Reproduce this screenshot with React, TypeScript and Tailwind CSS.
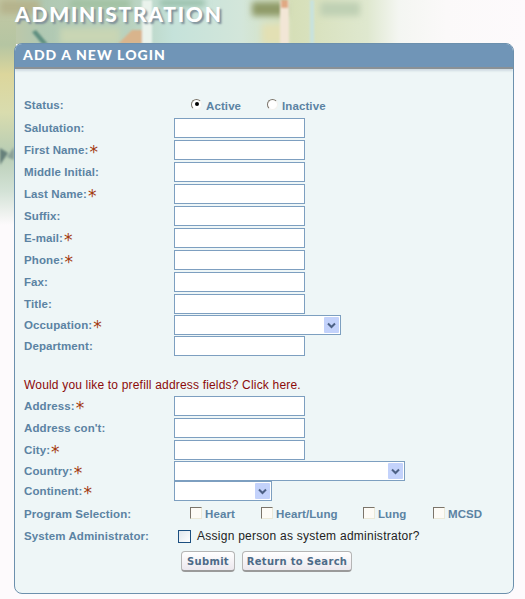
const sans = "font-['Liberation_Sans',Arial,sans-serif]";
const labelText = "text-[11.5px] font-bold tracking-[0.1px] text-[#5b83a3]";

function Star() {
  return <span className="text-[#a33a10] text-[17px] leading-[10px] font-normal font-['DejaVu_Sans',sans-serif] ml-[1px] relative top-[1px]">*</span>;
}

function Label({ text, req }: { text: string; req?: boolean }) {
  return (
    <div className={`flex items-center whitespace-nowrap pt-[2px] ${labelText}`}>
      {text}
      {req && <Star />}
    </div>
  );
}

function Field({ text, req }: { text: string; req?: boolean }) {
  return (
    <div className="flex items-center h-[22px]">
      <div className="w-[150px]"><Label text={text} req={req} /></div>
      <div className="w-[131px] h-[20px] bg-white border border-[#7d9fc0]" />
    </div>
  );
}

function Chevron() {
  return (
    <div className="w-[15px] h-[16px] mr-[1px] bg-[#c3d2fb] rounded-[1px] flex items-center justify-center">
      <svg width="9" height="7" viewBox="0 0 9 7"><path d="M1 1.5 L4.5 5 L8 1.5" fill="none" stroke="#4d6185" strokeWidth="2" /></svg>
    </div>
  );
}

function Radio({ on, label }: { on?: boolean; label: string }) {
  return (
    <div className="flex items-center">
      <div className="w-[11px] h-[11px] rounded-full bg-white border border-t-[#7b746a] border-l-[#7b746a] border-r-[#f4f2ee] border-b-[#f4f2ee] flex items-center justify-center relative -top-[1px]">
        {on && <div className="w-[4px] h-[4px] rounded-full bg-black" />}
      </div>
      <span className={`ml-[4px] relative top-[2px] ${labelText}`}>{label}</span>
    </div>
  );
}

function Check({ label, w }: { label: string; w: string }) {
  return (
    <div className={`flex items-center ${w}`}>
      <div className="w-[12px] h-[12px] bg-[#fdfbf6] border border-t-[#7b746a] border-l-[#7b746a] border-r-[#ece9d8] border-b-[#ece9d8] relative -top-[1px]" />
      <span className={`ml-[3px] relative top-[1px] ${labelText}`}>{label}</span>
    </div>
  );
}

function Btn({ text, w }: { text: string; w: string }) {
  return (
    <div className={`${w} h-[21px] rounded-[4px] border border-[#b5b5b5] border-b-2 border-b-[#9a9a9a] bg-gradient-to-b from-white to-[#ece8ee] flex items-center justify-center whitespace-nowrap text-[10px] font-bold tracking-[0.3px] text-[#4d6b88] font-['DejaVu_Sans',sans-serif]`}>
      {text}
    </div>
  );
}

export default function App() {
  return (
    <div className={`relative w-[525px] h-[599px] overflow-hidden bg-[#fdfafc] ${sans}`}>
      <svg aria-hidden className="absolute left-0 top-0" width="525" height="599" viewBox="0 0 525 599">
        <defs>
          <linearGradient id="top" x1="0" x2="1" y1="0" y2="0">
            <stop offset="0" stopColor="#c4c8a4" />
            <stop offset="0.08" stopColor="#b0c8b2" />
            <stop offset="0.25" stopColor="#b9d2bf" />
            <stop offset="0.33" stopColor="#c5e2da" />
            <stop offset="0.46" stopColor="#d3e6da" />
            <stop offset="0.56" stopColor="#d6dfb8" />
            <stop offset="0.7" stopColor="#dfe8cf" />
            <stop offset="0.76" stopColor="#f4f6f2" />
            <stop offset="0.85" stopColor="#fbf9f9" />
            <stop offset="1" stopColor="#fdfafc" />
          </linearGradient>
          <linearGradient id="lft" x1="0" x2="0" y1="0" y2="1">
            <stop offset="0" stopColor="#c4c8a4" />
            <stop offset="0.2" stopColor="#b5c5a2" />
            <stop offset="0.33" stopColor="#dcd69c" />
            <stop offset="0.5" stopColor="#d9dcae" />
            <stop offset="0.68" stopColor="#b8cdb4" />
            <stop offset="0.85" stopColor="#d3e2d6" />
            <stop offset="1" stopColor="#fdfafc" />
          </linearGradient>
          <filter id="bl"><feGaussianBlur stdDeviation="3" /></filter>
          <filter id="bl2"><feGaussianBlur stdDeviation="1" /></filter>
        </defs>
        <rect x="0" y="0" width="525" height="44" fill="url(#top)" />
        <rect x="0" y="0" width="16" height="225" fill="url(#lft)" />
        <g filter="url(#bl)">
          <rect x="0" y="0" width="40" height="14" fill="#b5b38c" />
          <rect x="70" y="0" width="60" height="8" fill="#9fbf9f" />
          <rect x="160" y="0" width="45" height="6" fill="#8fb8a0" />
          <rect x="60" y="28" width="60" height="16" fill="#c9d6b4" />
          <rect x="252" y="2" width="34" height="14" fill="#8f9a68" />
          <rect x="262" y="24" width="24" height="20" fill="#e3e0b4" />
          <rect x="320" y="2" width="40" height="14" fill="#bfd0b4" />
        </g>
        <g filter="url(#bl2)">
          <path d="M36 30 L48 44 L42 44 L32 32 Z" fill="#5f8f80" />
          <path d="M118 44 L132 30 L142 30 L146 44 Z" fill="#d9b48c" />
          <rect x="142" y="0" width="10" height="44" fill="#eaf3ec" />
          <rect x="280" y="0" width="9" height="44" fill="#f2e6d6" />
          <rect x="281" y="0" width="7" height="8" fill="#e0a984" />
          <rect x="310" y="0" width="4" height="44" fill="#c8e2de" />
          <path d="M0 148 L8 153 L0 165 Z" fill="#66807a" />
          <path d="M7 157 L14 147 L14 160 Z" fill="#8aa198" />
        </g>
      </svg>

      <div className="relative pl-[14px] pt-[2px] pr-[11px]">
        <h1 className="h-[41px] pl-[1px] text-[21px] leading-[24px] font-black tracking-[1.75px] text-white font-['Lato',sans-serif] [text-shadow:2px_2px_2px_#7d8d98]">ADMINISTRATION</h1>

        <div className="h-[551px] rounded-[8px] border border-[#6c90ad] bg-[#eef6f7] overflow-hidden">
          <div className="h-[25px] bg-[#7095b7] border-b-2 border-b-[#8a9196] shadow-[0_2px_2px_#cfdbe2] pl-[8px] pb-[3px] flex items-center">
            <h2 className="text-[14px] font-black tracking-[1.05px] text-white font-['Lato',sans-serif]">ADD A NEW LOGIN</h2>
          </div>

          <div className="pl-[9px] pt-[25px]">
            <div className="flex items-center h-[22px]">
              <div className="w-[167px]"><Label text="Status:" /></div>
              <div className="w-[76px]"><Radio on label="Active" /></div>
              <Radio label="Inactive" />
            </div>
            <div className="pt-[1px]">
              <Field text="Salutation:" />
              <Field text="First Name:" req />
              <Field text="Middle Initial:" />
              <Field text="Last Name:" req />
              <Field text="Suffix:" />
              <Field text="E-mail:" req />
              <Field text="Phone:" req />
              <Field text="Fax:" />
              <Field text="Title:" />
              <div className="h-[20px] flex items-center">
                <div className="w-[150px]"><Label text="Occupation:" req /></div>
                <div className="w-[167px] h-[20px] bg-white border border-[#7d9fc0] flex items-center justify-end"><Chevron /></div>
              </div>
              <Field text="Department:" />
            </div>
            <div className="h-[38px] pt-[20px] text-[12px] leading-[16px] tracking-[0.18px] text-[#8c0a0a]">Would you like to prefill address fields? Click here.</div>
            <Field text="Address:" req />
            <Field text="Address con't:" />
            <Field text="City:" req />
            <div className="h-[20px] flex items-center">
              <div className="w-[150px]"><Label text="Country:" req /></div>
              <div className="w-[231px] h-[20px] bg-white border border-[#7d9fc0] flex items-center justify-end"><Chevron /></div>
            </div>
            <div className="h-[20px] flex items-center">
              <div className="w-[150px]"><Label text="Continent:" req /></div>
              <div className="w-[98px] h-[20px] bg-white border border-[#7d9fc0] flex items-center justify-end"><Chevron /></div>
            </div>
            <div className="flex items-center h-[22px] mt-[2px]">
              <div className="w-[166px]"><Label text="Program Selection:" /></div>
              <Check label="Heart" w="w-[71px]" />
              <Check label="Heart/Lung" w="w-[102px]" />
              <Check label="Lung" w="w-[70px]" />
              <Check label="MCSD" w="w-[60px]" />
            </div>
            <div className="flex items-center h-[22px]">
              <div className="w-[154px]"><Label text="System Administrator:" /></div>
              <div className="w-[13px] h-[13px] border border-[#1c4f80] bg-gradient-to-br from-[#dfe6ec] to-white" />
              <span className="ml-[6px] text-[12px] tracking-[0.26px] text-[#222]">Assign person as system administrator?</span>
            </div>
            <div className="flex gap-[7px] pl-[157px] mt-[4px]">
              <Btn text="Submit" w="w-[54px]" />
              <Btn text="Return to Search" w="w-[110px]" />
            </div>
          </div>
        </div>
      </div>
    </div>
  );
}
